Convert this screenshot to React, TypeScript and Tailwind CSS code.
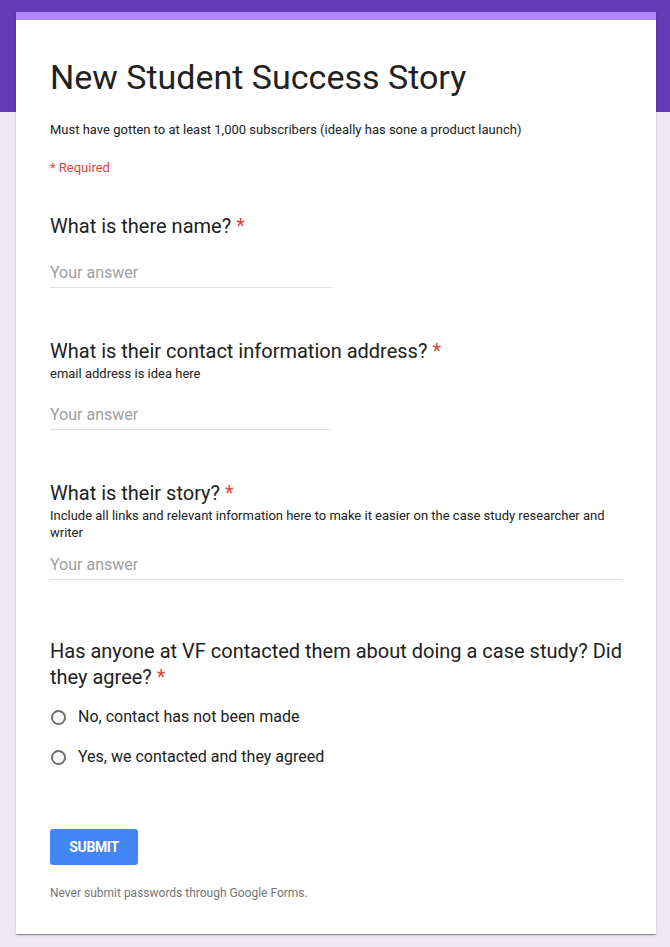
import React from "react";

const Star = () => <span className="ml-[5px] text-[#db4437]">*</span>;

const AnswerLine = ({ wide, className = "" }: { wide?: boolean; className?: string }) => (
  <div
    className={`${wide ? "w-full" : "w-[282px]"} border-b border-[#e0e0e0] pb-[2px] text-[16px] leading-[24px] text-[#9e9e9e] ${className}`}
  >
    Your answer
  </div>
);

const options = ["No, contact has not been made", "Yes, we contacted and they agreed"];

export default function App() {
  return (
    <div className="min-h-screen bg-[linear-gradient(#673ab7_0_112px,#ede7f6_112px)] pt-3 pb-3 font-[Roboto,sans-serif] text-[#212121]">
      <div className="ml-4 w-[640px] bg-white border-t-8 border-[#b388ff] shadow-[0_2px_1px_-1px_rgba(0,0,0,0.2),0_1px_1px_0_rgba(0,0,0,0.14),0_1px_3px_0_rgba(0,0,0,0.12)] px-[34px] pt-[37px] pb-[33px]">
        {/* Header */}
        <h1 className="text-[34px] leading-[40px] font-normal">New Student Success Story</h1>
        <p className="mt-6 text-[13px] leading-[18px]">
          Must have gotten to at least 1,000 subscribers (ideally has sone a product launch)
        </p>
        <p className="mt-5 text-[13px] leading-[18px] text-[#db4437]">* Required</p>

        {/* Q1 */}
        <div className="mt-9">
          <h2 className="text-[20px] leading-[26px]">
            What is there name?
            <Star />
          </h2>
          <AnswerLine className="mt-[22px]" />
        </div>

        {/* Q2 */}
        <div className="mt-[50px]">
          <h2 className="text-[20px] leading-[26px]">
            What is their contact information address?
            <Star />
          </h2>
          <p className="mt-px text-[13px] leading-[17px]">email address is idea here</p>
          <AnswerLine className="mt-[21px]" />
        </div>

        {/* Q3 */}
        <div className="mt-[50px]">
          <h2 className="text-[20px] leading-[26px]">
            What is their story?
            <Star />
          </h2>
          <p className="mt-px text-[13px] leading-[17px]">
            Include all links and relevant information here to make it easier on the case study researcher and writer
          </p>
          <AnswerLine wide className="mt-3" />
        </div>

        {/* Q4 */}
        <div className="mt-[58px]">
          <h2 className="text-[20px] leading-[26px]">
            Has anyone at VF contacted them about doing a case study? Did{" "}
            <span className="whitespace-nowrap">
              they agree?
              <Star />
            </span>
          </h2>
          <div className="mt-[15px] flex flex-col gap-4">
            {options.map((o) => (
              <label key={o} className="flex items-center h-6 text-[16px] leading-[24px]">
                <span className="ml-px w-[15px] h-[15px] rounded-full border-2 border-[#6f6f6f]" />
                <span className="ml-[12px]">{o}</span>
              </label>
            ))}
          </div>
        </div>

        {/* Submit */}
        <button className="mt-[60px] w-[88px] h-9 rounded-[3px] bg-[#4285f4] text-white text-[14px] font-bold tracking-tight">
          SUBMIT
        </button>
        <p className="mt-5 text-[12px] leading-4 text-[#757575]">
          Never submit passwords through Google Forms.
        </p>
      </div>
    </div>
  );
}
